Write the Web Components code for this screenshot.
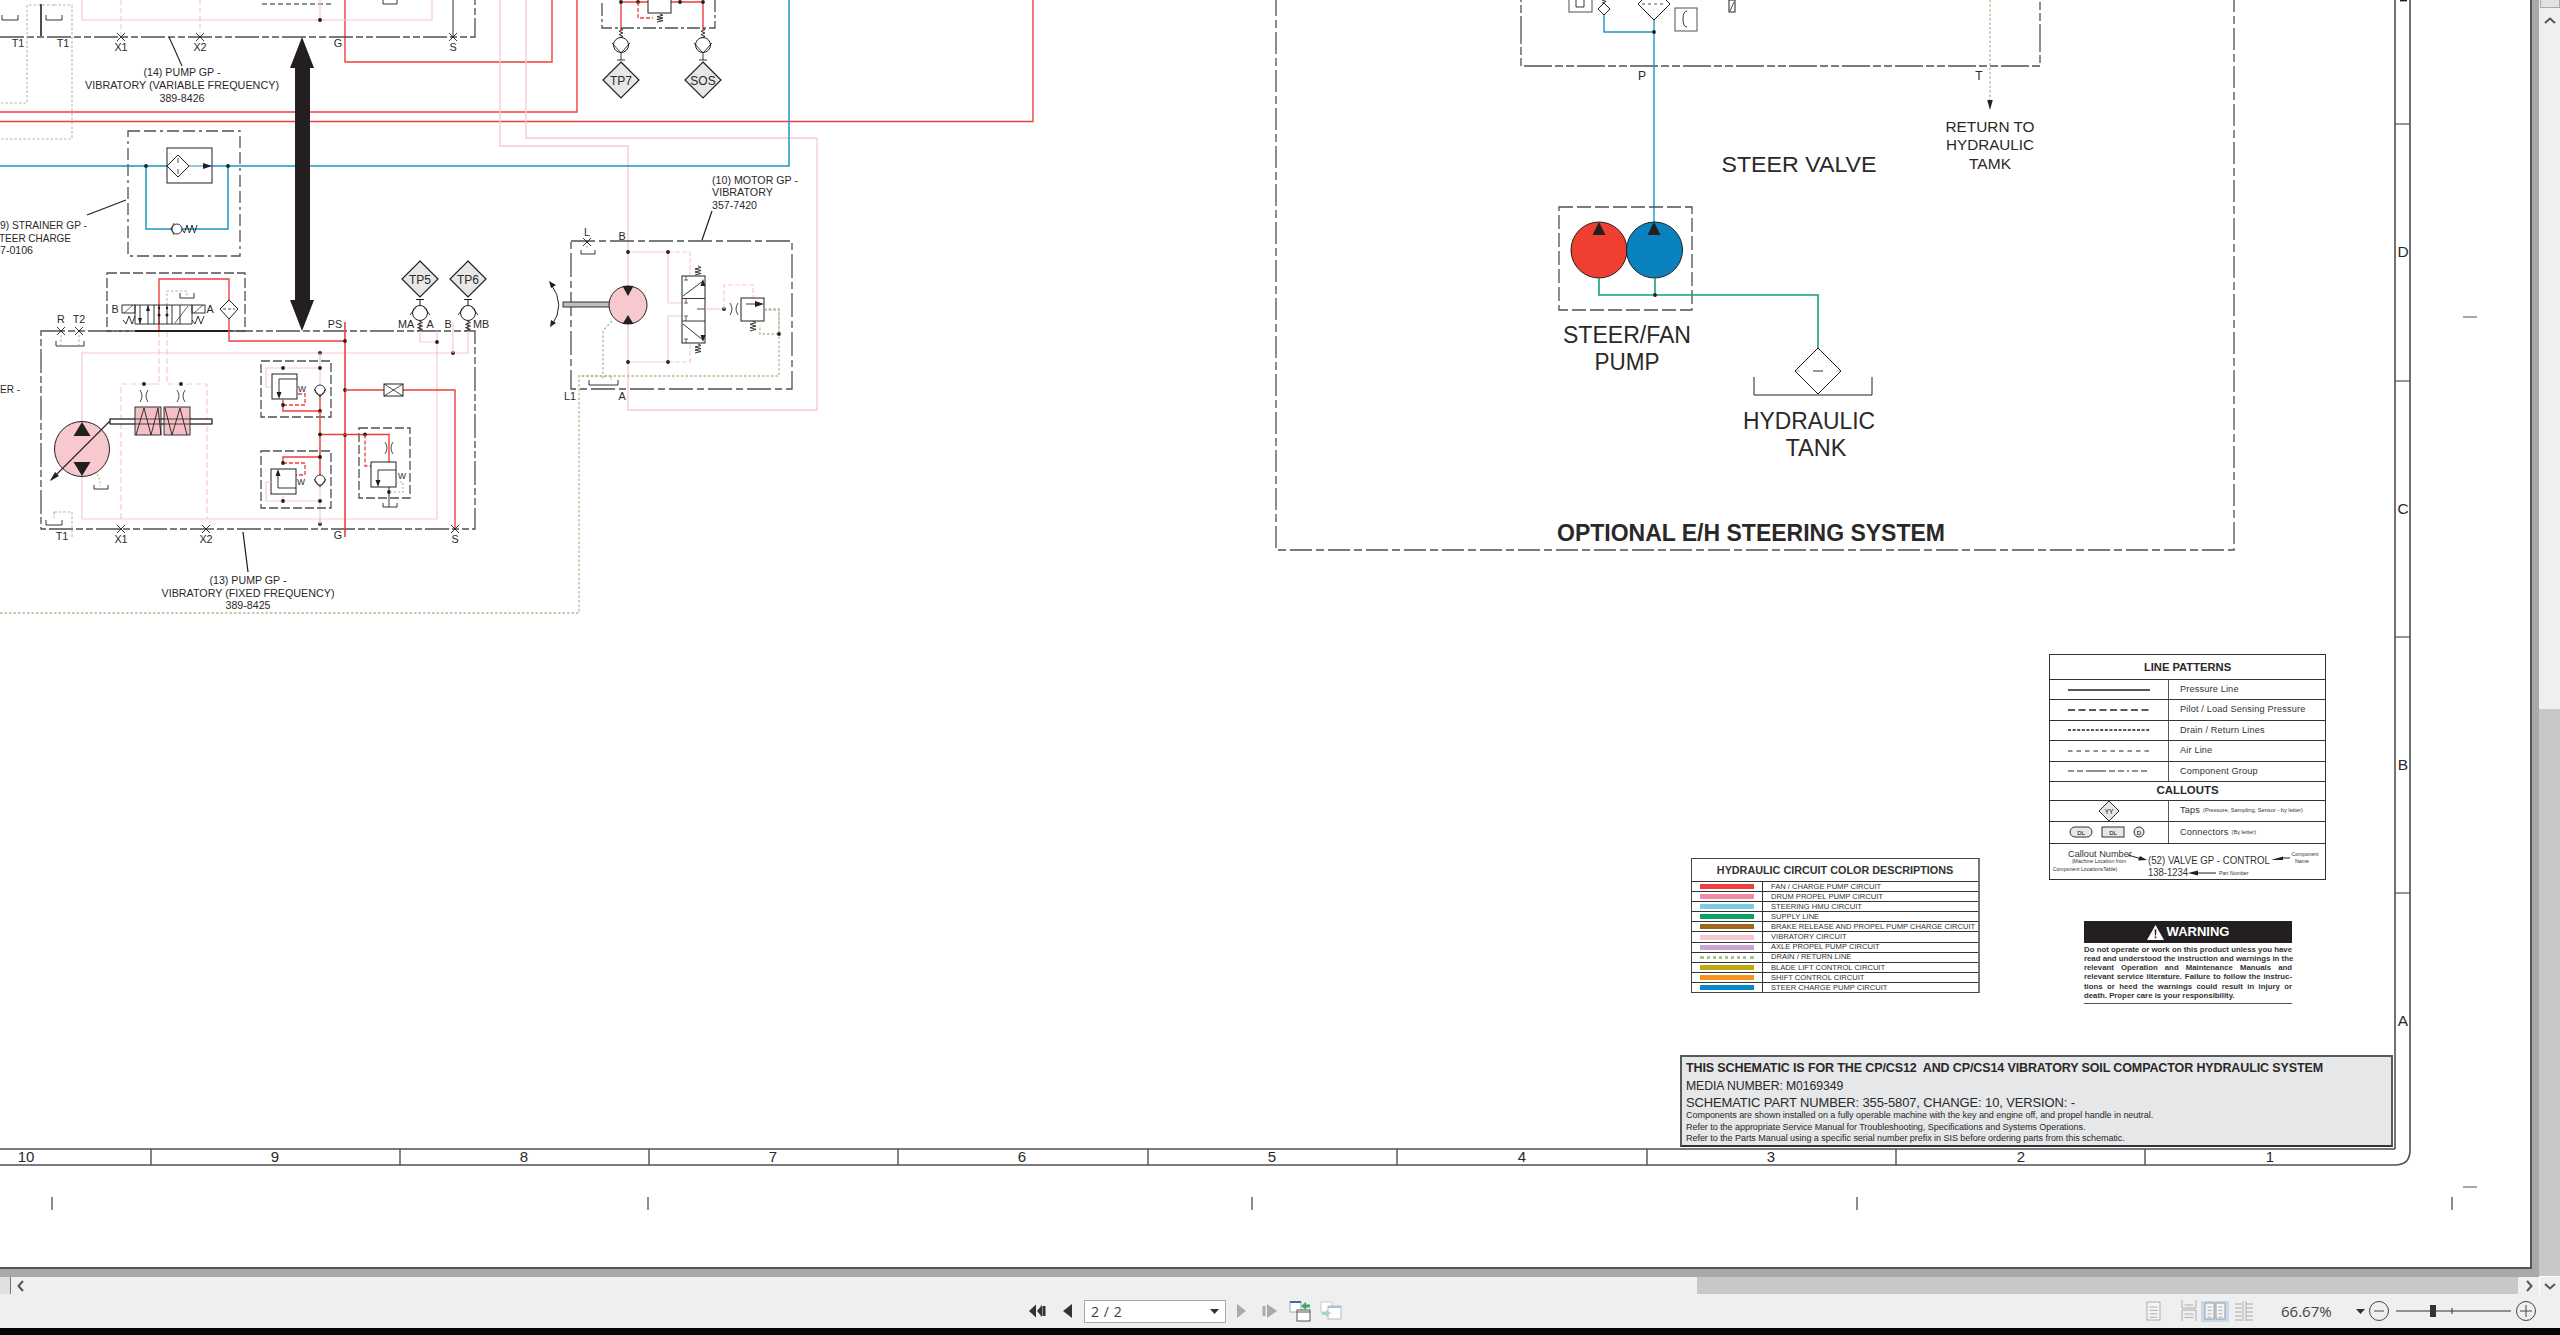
<!DOCTYPE html>
<html lang="en"><head><meta charset="utf-8"><title>Schematic</title>
<style>html,body{margin:0;height:100%;overflow:hidden;background:#000}</style></head>
<body><viewer-app></viewer-app>
<script>
const INK='#231f20',GREY='#4f5052',RED='#ee3f3c',PINK='#f7c8cd',BLUE='#1a96c4',SEA='#17a173',DRAIN='#a9c08f';
const GROUP='24 3 7 3 7 3';
const P=(d,c=INK,w=1,dash='',fill='none')=>`<path d="${d}" stroke="${c}" stroke-width="${w}" fill="${fill}"${dash?` stroke-dasharray="${dash}"`:''}/>`;
const DOT=(x,y,r=1.9)=>`<circle cx="${x}" cy="${y}" r="${r}" fill="${INK}"/>`;
const CROSS=(x,y,r=4)=>P(`M${x-r} ${y-r}L${x+r} ${y+r}M${x-r} ${y+r}L${x+r} ${y-r}`,INK,.9);
const T=(s,x,y,size=10.8,anchor='middle',len=0,weight='')=>`<text x="${x}" y="${y}" font-size="${size}" text-anchor="${anchor}"${weight?` font-weight="${weight}"`:''}${len?` textLength="${len}" lengthAdjust="spacingAndGlyphs"`:''}>${s}</text>`;
const GR=(x,y,w,h,dash=GROUP,c=GREY,sw=1.3)=>`<rect x="${x}" y="${y}" width="${w}" height="${h}" fill="none" stroke="${c}" stroke-width="${sw}" stroke-dasharray="${dash}"/>`;
const TANK=(x,y,w,h=5)=>P(`M${x} ${y-h}V${y}H${x+w}V${y-h}`,INK,.9);
function springV(x,y1,y2,a=3,n=4,c=INK){let d=`M${x} ${y1}`,s=(y2-y1)/(n*2);for(let i=0;i<n*2;i++)d+=`L${x+(i%2?-a:a)} ${y1+s*(i+1)}`;return P(d,c,.9)}
function springH(x1,x2,y,a=3,n=3,c=INK){let d=`M${x1} ${y}`,s=(x2-x1)/(n*2);for(let i=0;i<n*2;i++)d+=`L${x1+s*(i+1)} ${y+(i%2?-a:a)}`;return P(d,c,.9)}
const TRI=(x,tip,base,h=5)=>`<path d="M${x} ${tip}L${x-h} ${base}H${x+h}Z" fill="${INK}"/>`;
const TRIH=(tip,base,y,h=3)=>`<path d="M${tip} ${y}L${base} ${y-h}V${y+h}Z" fill="${INK}"/>`;
const ORI=(x,y)=>P(`M${x-4} ${y-6}Q${x} ${y} ${x-4} ${y+6}M${x+4} ${y-6}Q${x} ${y} ${x+4} ${y+6}`,INK,.8);
const TP=(cx,cy,label,r=18,size=12)=>`<path d="M${cx} ${cy-r}L${cx+r} ${cy}L${cx} ${cy+r}L${cx-r} ${cy}Z" fill="#e6e7e8" stroke="${INK}" stroke-width="1.2"/>`+T(label,cx,cy+4.5,size);
const CHK=(x,y,r=5)=>`<circle cx="${x}" cy="${y}" r="${r}" fill="#fff" stroke="${INK}" stroke-width=".9"/>`+P(`M${x-r-1} ${y-1}L${x} ${y+r+2}L${x+r+1} ${y-1}`,INK,.8);

class HydraulicSchematic extends HTMLElement{
  connectedCallback(){
    const s=[];
    // sheet frame
    s.push(P('M2395 0V1149M0 1149H2395M2410 0V1150Q2410 1165 2395 1165H0',GREY,1.6));
    [124,381,637,893].forEach(y=>s.push(P(`M2395 ${y}H2410`,GREY,1.2)));
    s.push(P('M2400 .7H2407',INK,1.4));
    [['D',251],['C',508],['B',764],['A',1020]].forEach(([l,y])=>s.push(T(l,2403,y+6,15.5)));
    [151,400,649,898,1148,1397,1647,1896,2145].forEach(x=>s.push(P(`M${x} 1149V1165`,GREY,1.4)));
    [['10',26],['9',275],['8',524],['7',773],['6',1022],['5',1272],['4',1522],['3',1771],['2',2021],['1',2270]].forEach(([l,x])=>s.push(T(l,x,1162,15)));
    [52,648,1252,1857,2452].forEach(x=>s.push(P(`M${x} 1197V1210`,GREY,1.3)));
    s.push(P('M2463 317H2477M2463 1187H2477',GREY,1.2));

    // long circuit runs
    s.push(P('M345 0V62H552V0',RED,1.4),P('M0 112H577V0',RED,1.4),P('M0 121.5H1033V0',RED,1.4));
    s.push(P('M500 0V146H628V410H817V138H526V0',PINK,1.3));
    s.push(P('M0 166H789V0',BLUE,1.5));
    s.push(P('M0 613H579V376H779V334M779 334V310H764',DRAIN,1.3,'2.5 2'));

    // pump 14 group (top)
    s.push(P('M0 37H475V0',GREY,1.3,GROUP));
    s.push(P('M27 5V103H0M54 5H27',DRAIN,1.1,'2.5 2'),P('M54 5H72V139H0',DRAIN,1.1,'2.5 2'));
    s.push(P('M2 15V20H18V15M46 15V20H62V15',INK,.9),P('M41 4V36',INK,1.6));
    s.push(P('M82 0V20H432V0',PINK,1.2),P('M121 0V36M200 0V36',PINK,1.2,'5 3'));
    s.push(P('M262 4H332',INK,1,'5 3'),P('M320 0V20',PINK,1.2),DOT(320,20,2),P('M383 0V4H397V0',INK,.9),P('M453 0V37',INK,.9));
    s.push(CROSS(121,37),CROSS(200,37),CROSS(453,37));
    s.push(T('T1',18,47),T('T1',63,47),T('X1',121,51),T('X2',200,51),T('G',338,47),T('S',453,51));
    s.push(P('M169 37L182 66',INK,1.1));
    s.push(T('(14) PUMP GP -',182,76,10.8,'middle',77),T('VIBRATORY (VARIABLE FREQUENCY)',182,89,10.8,'middle',194),T('389-8426',182,102,10.8,'middle',45));

    // strainer
    s.push(GR(128,131,112,125,'12 4 12 4 3 4'));
    s.push(P('M87 215L126 200',INK,1.1));
    s.push(T('9) STRAINER GP -',87,229,10.8,'end',87),T('TEER CHARGE',71,242,10.8,'end',72),T('7-0106',33,254,10.8,'end',33));
    s.push(P('M146 166V229H228V166',BLUE,1.5));
    s.push(`<rect x="167" y="148" width="45" height="35" fill="#fff" stroke="${INK}"/>`,P('M167 166H212',BLUE,1.2));
    s.push(`<path d="M178 155L189 166L178 177L167 166Z" fill="#fff" stroke="${INK}"/>`,P('M178 158V163M178 169V174',INK,.8),TRIH(212,203,166),DOT(146,166),DOT(228,166));
    s.push(`<circle cx="177" cy="229" r="5" fill="#fff" stroke="${INK}" stroke-width=".9"/>`,P('M174 223L171 229L174 235',INK,.8),springH(182,197,229,4,3));

    // small manifold above pump 13
    s.push(GR(107,273,138,58,'10 3 10 3'));
    s.push(P('M159 331V279H229V300',RED,1.4));
    s.push(P('M167 305V291H187V296',DRAIN,1.1,'2.5 2'),P('M180 293V298H194V293',INK,.9));
    s.push(`<path d="M229 300L238 309L229 319L220 309Z" fill="#fff" stroke="${INK}"/>`,P('M223 309H235',INK,.8,'3 2'));
    s.push(P('M229 319V341H345',RED,1.4),P('M159 331V384H144M167 331V384H207V519M121 519V384H159',PINK,1.2,'6 3'));
    s.push(`<rect x="122" y="305" width="13" height="8" fill="#fff" stroke="${INK}" stroke-width=".9"/><rect x="192" y="305" width="13" height="8" fill="#fff" stroke="${INK}" stroke-width=".9"/>`);
    s.push(P('M124 313L133 305M194 313L203 305',INK,.7),springH(123,135,320,4,2),springH(192,204,320,4,2));
    s.push(P('M135 305H192V324H135ZM140 305V324M148 305V324M154 305V324M159 305V324M167 305V324M172 305V324M180 305V324',INK,.9));
    s.push(TRI(148,305,311,2),TRI(140,324,318,2),DOT(159,315,1.5),DOT(167,315,1.5),DOT(159,308,1.2),DOT(167,308,1.2));
    s.push(P('M175 323L188 306',INK,.7));
    s.push(T('B',115,313),T('A',210,313));

    // pump 13 group
    s.push(GR(41,331,434,198));
    s.push(P('M135 331H228',INK,2.2));
    s.push(T('R',61,323),T('T2',79,323),CROSS(61,331),CROSS(79,331));
    s.push(P('M61 335V345M79 335V345',DRAIN,1.1,'2.5 2'),TANK(56,346,28,5));
    s.push(P('M82 519V353H468V331M82 519H437V331M420 331V342H437',PINK,1.2));
    s.push(DOT(437,342),DOT(453,353),P('M453 353V322',PINK,1.2),DOT(320,353),DOT(320,524));
    s.push(P('M320 353V390M320 435V524',PINK,1.2));
    // pump
    s.push(`<circle cx="82" cy="449" r="27.5" fill="#f7c9ce" stroke="${INK}" stroke-width="1"/>`,TRI(82,422,436,8.5),TRI(82,476,462,8.5));
    s.push(P('M51 480L110 421',INK,1.1),`<path d="M50 481L55 472L59 476Z" fill="${INK}"/>`);
    s.push(`<rect x="110" y="419" width="102" height="5" fill="#fff" stroke="${INK}" stroke-width=".8"/>`);
    s.push(P('M97 474L100 480V486',DRAIN,1.1,'2 2'),TANK(94,489,14,4));
    s.push(P('M54 512H72V537',DRAIN,1.1,'2.5 2'),P('M54 512V518',DRAIN,1.1,'2.5 2'),TANK(46,525,16,5));
    // control
    s.push(DOT(144,384),DOT(181,384),ORI(144,396),ORI(181,396));
    s.push(`<rect x="135" y="407" width="26" height="28" fill="#f4bfc5" stroke="${INK}" stroke-width=".9"/><rect x="164" y="407" width="26" height="28" fill="#f4bfc5" stroke="${INK}" stroke-width=".9"/>`);
    s.push(P('M136 435L144 408L151 435L158 408L161 435M165 408L172 435L180 408L187 435',INK,.9));
    s.push(`<rect x="110" y="419" width="102" height="5" fill="none" stroke="${INK}" stroke-width=".8"/>`);
    // relief boxes
    s.push(GR(261,361,70,56,'9 3'),GR(261,451,70,57,'9 3'),GR(359,428,51,70,'9 3'));
    s.push(P('M320 368H266V387H272',PINK,1.2),DOT(283,368),DOT(320,368));
    s.push(`<rect x="272" y="374" width="25" height="25" fill="#fff" stroke="${INK}"/>`,P('M297 379H279V395',INK,.9),TRI(279,399,392,2.5));
    s.push(T('W',302,392,8.5));
    s.push(P('M283 399V411H320V390',RED,1.4),P('M283 405H305V394H297',RED,1.3,'4 2'),DOT(283,405),DOT(320,411));
    s.push(CHK(320,390),P('M320 411V475',RED,1.4),CHK(320,480));
    s.push(P('M283 463V457H320',RED,1.4),P('M283 463H305V475H296',RED,1.3,'4 2'),DOT(283,463),DOT(320,457));
    s.push(`<rect x="271" y="469" width="25" height="25" fill="#fff" stroke="${INK}"/>`,P('M296 488H278V472',INK,.9),TRI(278,469,476,2.5));
    s.push(T('W',301,485,8.5));
    s.push(P('M283 494V501M320 501H266V482H271',PINK,1.2),DOT(283,501),DOT(320,501));
    s.push(P('M345 322V537',RED,1.6),DOT(345,341),DOT(345,390),DOT(345,435));
    s.push(P('M345 390H455V529',RED,1.4));
    s.push(`<rect x="384" y="384" width="19" height="12" fill="#fff" stroke="${INK}"/>`,P('M384 384L403 396M384 396L403 384',INK,.8));
    s.push(P('M320 434.5H389V462',RED,1.4),DOT(320,434.5),DOT(365,434.5),ORI(389,448));
    s.push(P('M365 434.5V466H372',RED,1.3,'4 2'));
    s.push(`<rect x="371" y="462" width="25" height="25" fill="#fff" stroke="${INK}"/>`,P('M396 470H378V484',INK,.9),TRI(378,487,480,2.5));
    s.push(T('W',402,479,8.5));
    s.push(P('M389 487V507',INK,.9),DOT(389,492),P('M396 482H403V492H389',DRAIN,1.1,'2 2'),TANK(383,507,14,4));
    s.push(CROSS(121,529),CROSS(206,529),CROSS(455,529));
    s.push(T('T1',62,540),T('X1',121,543),T('X2',206,543),T('G',338,539),T('S',455,543),T('PS',335,328),T('MA',406,328),T('A',430,328),T('B',448,328),T('MB',481,328),T('ER -',20,393,10.8,'end',20));
    s.push(P('M243 532L248 572',INK,1.2));
    s.push(T('(13) PUMP GP -',248,584,10.8,'middle',77),T('VIBRATORY (FIXED FREQUENCY)',248,597,10.8,'middle',173),T('389-8425',248,609,10.8,'middle',45));
    s.push(P('M420 321V331M468 321V331',INK,.8));
    // big double arrow
    s.push(`<path d="M302 37L314 68H310V300H314L302 331L290 300H295V68H290Z" fill="${INK}"/>`);
    // test ports
    s.push(TP(420,279,'TP5'),TP(468,279,'TP6'));
    [420,468].forEach(x=>{s.push(P(`M${x-4} 299.5H${x+4}M${x} 299.5V306`,INK,1),`<circle cx="${x}" cy="313" r="7.5" fill="#fff" stroke="${INK}"/>`,P(`M${x-10} 315L${x-4} 307M${x+10} 315L${x+4} 307`,INK,.9),springV(x,321,331,2.5,3))});
    // upper test ports
    s.push(GR(602,-20,113,48,'13 3 3 3'));
    s.push(P('M621 2H703V30',RED,1.4),P('M621 2V30',RED,1.4),DOT(621,2),DOT(638,2),DOT(680,2),DOT(703,2));
    s.push(`<rect x="648" y="-4" width="23" height="17" fill="#fff" stroke="${INK}"/>`,P('M638 2V18H653',RED,1.3,'4 2'),springV(660,14,22,3,3));
    [[621,'TP7'],[703,'SOS']].forEach(([x,l])=>{s.push(springV(x,28,38,2,3),`<circle cx="${x}" cy="45" r="7.5" fill="#fff" stroke="${INK}"/>`,P(`M${x-9} 43L${x} 53L${x+9} 43M${x} 53V60M${x-4} 60H${x+4}`,INK,.9),TP(x,80,l))});
    // motor group
    s.push(GR(571,241,221,148,'24 4 7 4'));
    s.push(P('M712 211L702 240',INK,1.2));
    s.push(T('(10) MOTOR GP -',712,184,10.8,'start',86),T('VIBRATORY',712,196,10.8,'start',61),T('357-7420',712,209,10.8,'start',45));
    s.push(T('L',587,236),CROSS(587,242),T('B',622,240),T('L1',570,400),T('A',622,400));
    s.push(P('M587 246V250',DRAIN,1.1,'2 2'),TANK(581,254,14,4));
    s.push(P('M628 252H668V303H682',PINK,1.2),P('M668 252H690V275',PINK,1.2,'5 2'),P('M628 362H668V316H682',PINK,1.2),P('M668 362H690V343',PINK,1.2,'5 2'));
    s.push(DOT(628,252),DOT(668,252),DOT(628,362),DOT(668,362));
    s.push(`<rect x="563" y="302" width="47" height="5" fill="#bcbec0" stroke="${INK}" stroke-width=".9"/>`);
    s.push(`<circle cx="628" cy="305" r="19" fill="#f7c9ce" stroke="${INK}"/>`,TRI(628,296,286,5.5),TRI(628,315,324,5.5));
    s.push(P('M551 284Q566 305 552 325',INK,1),`<path d="M549 281L556 285L551 288Z" fill="${INK}"/><path d="M550 327L556 323L551 320Z" fill="${INK}"/>`);
    s.push(springV(698,266,275,3,3),springV(698,344,353,3,3));
    s.push(`<rect x="682" y="276" width="23" height="67" fill="#fff" stroke="${INK}" stroke-width="1"/>`,P('M682 298.5H705M682 321H705M683 296L703 281M683 324L703 340',INK,.9));
    s.push(TRI(703,279,286,2.5),TRI(703,342,335,2.5),P('M686 276V280M684 280H688M686 343V339M684 339H688M686 298V303M684 303H688M686 321V316M684 316H688',INK,.7));
    s.push(P('M705 309H724',PINK,1.2),P('M697 309H705',INK,.8),DOT(724,309),ORI(734,309));
    s.push(P('M724 309V285H753V298',PINK,1.2,'5 2'));
    s.push(`<rect x="741" y="298" width="23" height="23" fill="#fff" stroke="${INK}"/>`,P('M746 304H760',INK,.9),TRIH(764,755,304,3));
    s.push(springV(753,321,331,3,3));
    s.push(P('M764 309H779V334H760V325',DRAIN,1.3,'2.5 2'),DOT(779,334));
    s.push(P('M612 321L603 331V380',DRAIN,1.3,'2.5 2'),P('M611 376H579M611 376V381',DRAIN,1.3,'2.5 2'),TANK(589,385,29,5));

    // steering system
    s.push(GR(1276,-40,958,590,'22 4 8 4'));
    s.push(GR(1521,-40,519,106,'28 3 8 3 8 3'));
    s.push(P('M1654 0V224',BLUE,1.4),P('M1604 14V32H1654',BLUE,1.4),DOT(1654,32));
    s.push(`<rect x="1569" y="-6" width="23" height="18" fill="#fff" stroke="${GREY}"/><path d="M1654 20L1670 4L1654 -12L1638 4Z" fill="#fff" stroke="${INK}"/>`,P('M1642 4H1666',INK,.8,'3 3'));
    s.push(`<path d="M1604 3L1610 9L1604 15L1598 9Z" fill="#fff" stroke="${INK}"/>`,springV(1604,-3,3,2,2),`<rect x="1675" y="8" width="22" height="23" fill="#fff" stroke="${GREY}"/>`,P('M1687 11Q1683 11 1683 19T1687 27',INK,.9));
    s.push(P('M1576 0V7H1584V0',INK,.9),`<rect x="1729" y="0" width="6" height="12" fill="#fff" stroke="${INK}"/>`,P('M1730 11L1734 2',INK,.8));
    s.push(P('M1990 0V100',DRAIN,1.3,'2.5 2'),TRI(1990,110,100,2.8));
    s.push(T('P',1642,80,12),T('T',1979,80,12));
    s.push(T('RETURN TO',1990,132,15,'middle',89),T('HYDRAULIC',1990,150,15,'middle',88),T('TAMK',1990,169,15,'middle',42));
    s.push(T('STEER VALVE',1799,172,22.5,'middle',155));
    s.push(GR(1559,207,133,103,'14 4 14 4'));
    s.push(`<circle cx="1599" cy="250" r="28" fill="#ee3f30" stroke="${INK}"/><circle cx="1654.5" cy="250" r="28" fill="#0b82c0" stroke="${INK}"/>`);
    s.push(TRI(1599,222,235,6.5),TRI(1654,222,235,6.5));
    s.push(P('M1599 278V295H1818V348M1655 278V295',SEA,1.6),DOT(1655,295));
    s.push(`<path d="M1818 348L1841 371L1818 394L1795 371Z" fill="#fff" stroke="${INK}"/>`,P('M1796 371H1800M1836 371H1840',DRAIN,1),P('M1813 371H1823',GREY,1.2));
    s.push(P('M1754 377V395H1872V377',INK,1));
    s.push(T('STEER/FAN',1627,342.5,23.5,'middle',128),T('PUMP',1627,369.5,23.5,'middle',65));
    s.push(T('HYDRAULIC',1809,428.5,23.5,'middle',132),T('TANK',1816,455.5,23.5,'middle',61));
    s.push(T('OPTIONAL E/H STEERING SYSTEM',1751,541,23.4,'middle',388,'700'));
    this.attachShadow({mode:'open'}).innerHTML=`<style>:host{display:block;width:2531px;height:1268px}svg{display:block;font-family:"Liberation Sans",Arial,sans-serif;fill:${INK}}text{fill:#2b2829}</style><svg width="2531" height="1268" viewBox="0 0 2531 1268">${s.join('')}</svg>`;
  }
}
customElements.define('hydraulic-schematic',HydraulicSchematic);

class LinePatterns extends HTMLElement{
  connectedCallback(){
    const sample=(dash,w=1.4)=>`<svg width="84" height="6" viewBox="0 0 84 6"><line x1="1" y1="3" x2="83" y2="3" stroke="#231f20" stroke-width="${w}" stroke-dasharray="${dash}"/></svg>`;
    this.attachShadow({mode:'open'}).innerHTML=`<style>
    :host{display:block;position:absolute;left:2049px;top:654px;width:277px;height:226px;box-sizing:border-box;border:1px solid #333;background:#fff;font:9.2px/1 "Liberation Sans",Arial,sans-serif;color:#333}
    .g{display:grid;grid-template-columns:119px 1fr;grid-template-rows:24px repeat(5,20.4px) 19px 21px 22px 1fr;height:100%}
    .h{grid-column:1/3;font-weight:700;text-align:center;display:flex;align-items:center;justify-content:center;font-size:11.2px;color:#2b2829;padding-top:2px;box-sizing:border-box}
    .h.b{font-size:11.4px;border-top:1px solid #333;padding-top:0}
    .l,.r{display:flex;align-items:center;border-top:1px solid #333}
    .l{justify-content:center;border-right:1px solid #555;gap:9px}
    .r{padding-left:11px;letter-spacing:.15px}
    small{font-size:5.7px;margin-left:3px;letter-spacing:0}
    .w{grid-column:1/3;border-top:1px solid #333}
    svg{display:block}
    .w text{fill:#333}
    </style><div class="g">
    <div class="h">LINE PATTERNS</div>
    <div class="l">${sample('',1.5)}</div><div class="r">Pressure Line</div>
    <div class="l">${sample('7 3.5',1.5)}</div><div class="r">Pilot / Load Sensing Pressure</div>
    <div class="l">${sample('3 1.6',1.4)}</div><div class="r">Drain / Return Lines</div>
    <div class="l">${sample('4.5 4',1)}</div><div class="r">Air Line</div>
    <div class="l">${sample('6 3 6 3 20 3 6 3 6 3 2 3',1)}</div><div class="r">Component Group</div>
    <div class="h b">CALLOUTS</div>
    <div class="l"><svg width="22" height="22" viewBox="0 0 22 22"><path d="M11 1L21 11L11 21L1 11Z" fill="#e6e7e8" stroke="#333"/><text x="11" y="13.5" font-size="6.5" text-anchor="middle">YY</text></svg></div><div class="r">Taps<small>(Pressure, Sampling, Sensor - by letter)</small></div>
    <div class="l"><svg width="80" height="12" viewBox="0 0 80 12"><rect x="1" y="1" width="22" height="10" rx="5" fill="#e6e7e8" stroke="#333"/><text x="12" y="8.5" font-size="6" text-anchor="middle">DL</text><rect x="33" y="1" width="22" height="10" fill="#e6e7e8" stroke="#333"/><text x="44" y="8.5" font-size="6" text-anchor="middle">DL</text><circle cx="70" cy="6" r="5" fill="#e6e7e8" stroke="#333"/><text x="70" y="8.5" font-size="6" text-anchor="middle">D</text></svg></div><div class="r">Connectors<small>(By letter)</small></div>
    <div class="w"><svg width="275" height="38" viewBox="0 0 275 38" font-family="Liberation Sans,Arial,sans-serif">
      <text x="18" y="13" font-size="9.2">Callout Number</text>
      <text x="49" y="19" font-size="5.2" text-anchor="middle">(Machine Location from</text>
      <text x="35" y="27" font-size="5.2" text-anchor="middle">Component LocationsTable)</text>
      <path d="M78 11L90 14.5" stroke="#231f20"/><path d="M97 16L88 16.5L90 12Z" fill="#231f20"/>
      <text x="98" y="20" font-size="10.2" textLength="122" lengthAdjust="spacingAndGlyphs">(52) VALVE GP - CONTROL</text>
      <path d="M240 14H232" stroke="#231f20"/><path d="M221 16L233 12.5V16Z" fill="#231f20"/>
      <text x="255" y="12" font-size="5.2" text-anchor="middle">Component</text><text x="252" y="19" font-size="5.2" text-anchor="middle">Name</text>
      <text x="98" y="32" font-size="10" textLength="40" lengthAdjust="spacingAndGlyphs">138-1234</text>
      <path d="M166 29H146" stroke="#231f20"/><path d="M138 29L148 26.5V31.5Z" fill="#231f20"/>
      <text x="169" y="31" font-size="5.2">Part Number</text>
    </svg></div></div>`;
  }
}
customElements.define('line-patterns',LinePatterns);

class ColorLegend extends HTMLElement{
  connectedCallback(){
    const rows=[['#ee3e3e','FAN / CHARGE PUMP CIRCUIT'],['#f28ba8','DRUM PROPEL PUMP CIRCUIT'],['#7ecbe3','STEERING HMU CIRCUIT'],['#0b9f62','SUPPLY LINE'],['#a0671c','BRAKE RELEASE AND PROPEL PUMP CHARGE CIRCUIT'],['#f7c8d2','VIBRATORY CIRCUIT'],['#c9a6d2','AXLE PROPEL PUMP CIRCUIT'],['dash','DRAIN / RETURN LINE'],['#bdaa12','BLADE LIFT CONTROL CIRCUIT'],['#f7931e','SHIFT CONTROL CIRCUIT'],['#0b88c6','STEER CHARGE PUMP CIRCUIT']];
    this.attachShadow({mode:'open'}).innerHTML=`<style>
    :host{display:block;position:absolute;left:1691px;top:858px;width:289px;height:135px;box-sizing:border-box;border:1px solid #444;border-right:2px solid #777;background:#fff;font:7.58px/1 "Liberation Sans",Arial,sans-serif;color:#333;overflow:hidden}
    .h{height:22px;display:flex;align-items:center;justify-content:center;font-weight:700;font-size:10.8px;color:#333}
    .g{display:grid;grid-template-columns:71px 1fr;grid-auto-rows:10.1px}
    .s{border-top:1px solid #333;border-right:1px solid #333;display:flex;align-items:center;justify-content:center;padding-right:1px}
    .t{border-top:1px solid #333;padding-left:8px;display:flex;align-items:center;white-space:nowrap}
    i{display:block;width:54px;height:5px}
    i.d{height:0;border-top:3px dotted #a9c48f}
    </style><div class="h">HYDRAULIC CIRCUIT COLOR DESCRIPTIONS</div><div class="g">${rows.map(([c,t])=>`<div class="s"><i ${c==='dash'?'class="d"':`style="background:${c}"`}></i></div><div class="t">${t}</div>`).join('')}</div>`;
  }
}
customElements.define('color-legend',ColorLegend);

class WarningBox extends HTMLElement{
  connectedCallback(){
    const lines=['Do not operate or work on this product unless you have','read and understood the instruction and warnings in the','relevant Operation and Maintenance Manuals and','relevant service literature. Failure to follow the instruc-','tions or heed the warnings could result in injury or'];
    this.attachShadow({mode:'open'}).innerHTML=`<style>
    :host{display:block;position:absolute;left:2084px;top:921px;width:208px;height:83px;box-sizing:border-box;border-bottom:1.5px solid #555;background:#fff;font:700 7.8px/9.3px "Liberation Sans",Arial,sans-serif;color:#333}
    .b{height:22px;background:#231f20;color:#fff;display:flex;align-items:center;justify-content:center;gap:3px;font-size:13px}
    .x{padding-top:1.5px}
    .x div{text-align:justify;text-align-last:justify;white-space:nowrap}
    .x div:last-child{text-align-last:left}
    </style><div class="b"><svg width="17" height="15" viewBox="0 0 17 15"><path d="M8.5 0L17 15H0Z" fill="#fff"/><path d="M7.6 4.5H9.4L9 10.5H8ZM7.7 11.5H9.3V13.2H7.7Z" fill="#231f20"/></svg><span>WARNING</span></div>
    <div class="x">${lines.map(l=>`<div>${l}</div>`).join('')}<div>death. Proper care is your responsibility.</div></div>`;
  }
}
customElements.define('warning-box',WarningBox);

class TitleBlock extends HTMLElement{
  connectedCallback(){
    this.attachShadow({mode:'open'}).innerHTML=`<style>
    :host{display:block;position:absolute;left:1680px;top:1055px;width:713px;height:92px;box-sizing:border-box;border:2px solid #58595b;border-bottom-color:#333;background:#e6e7e8;padding:3.5px 0 0 4px;font-family:"Liberation Sans",Arial,sans-serif;color:#2b2829;white-space:nowrap}
    div{display:block}
    .a{font:700 12.5px/14px "Liberation Sans",Arial,sans-serif;height:18px;letter-spacing:-.12px}
    .b{font-size:12.25px;line-height:14px;height:17.5px;letter-spacing:-.1px}
    .c{font-size:12.95px;line-height:14px;height:14px;letter-spacing:-.1px}
    .d{font-size:9.05px;line-height:11.6px;letter-spacing:-.06px}
    </style><div class="a">THIS SCHEMATIC IS FOR THE CP/CS12&nbsp; AND CP/CS14 VIBRATORY SOIL COMPACTOR HYDRAULIC SYSTEM</div>
    <div class="b">MEDIA NUMBER: M0169349</div>
    <div class="c">SCHEMATIC PART NUMBER: 355-5807, CHANGE: 10, VERSION: -</div>
    <div class="d">Components are shown installed on a fully operable machine with the key and engine off, and propel handle in neutral.</div>
    <div class="d">Refer to the appropriate Service Manual for Troubleshooting, Specifications and Systems Operations.</div>
    <div class="d">Refer to the Parts Manual using a specific serial number prefix in SIS before ordering parts from this schematic.</div>`;
  }
}
customElements.define('title-block',TitleBlock);

class DocPage extends HTMLElement{
  connectedCallback(){
    this.attachShadow({mode:'open'}).innerHTML=`<style>
    :host{display:block;flex:1;min-width:0;background:#a9a9a9;box-sizing:border-box;padding:0 7px 8px 0}
    .p{position:relative;height:100%;background:#fff;overflow:hidden;box-sizing:border-box;border-right:2px solid #555;border-bottom:2px solid #555}
    </style><div class="p"><slot></slot></div>`;
  }
}
customElements.define('doc-page',DocPage);

const CHEV=(d)=>`<svg width="14" height="14" viewBox="0 0 14 14"><path d="${d}" fill="none" stroke="#555" stroke-width="2"/></svg>`;
class VScrollbar extends HTMLElement{
  connectedCallback(){
    this.attachShadow({mode:'open'}).innerHTML=`<style>
    :host{display:flex;flex-direction:column;width:21px;background:#efefef;position:relative}
    .t{height:8px;background:#e2e2e2;border:1px solid #aaa;border-top:0;box-sizing:border-box;margin-left:1px}
    .c{display:flex;justify-content:center;height:18px;align-items:center;padding-top:4px}
    .s{flex:1}
    .m{height:567px;background:#c8c8c8;border-bottom:1px solid #fff}
    </style><div class="t"></div><div class="c">${CHEV('M2 9L7 4.5L12 9')}</div><div class="s"></div><div class="m"></div>`;
  }
}
customElements.define('v-scrollbar',VScrollbar);

class HScrollbar extends HTMLElement{
  connectedCallback(){
    this.attachShadow({mode:'open'}).innerHTML=`<style>
    :host{display:flex;height:17px;background:#efefef;align-items:stretch}
    .a{width:10px;background:#e0e0e0;border-right:1px solid #777}
    .c{display:flex;align-items:center;justify-content:center}
    .l{width:20px}
    .s{flex:1}
    .m{width:821px;background:#c8c8c8}
    .r{width:21px}
    .d{width:21px;border-left:1px solid #fff;box-sizing:border-box}
    </style><div class="a"></div><div class="c l">${CHEV('M9 2L4.5 7L9 12')}</div><div class="s"></div><div class="m"></div><div class="c r">${CHEV('M5 2L9.5 7L5 12')}</div><div class="c d">${CHEV('M2 5L7 9.5L12 5')}</div>`;
  }
}
customElements.define('h-scrollbar',HScrollbar);

class ViewerToolbar extends HTMLElement{
  connectedCallback(){
    const ic=(w,body)=>`<svg width="${w}" height="22" viewBox="0 0 ${w} 22">${body}</svg>`;
    const pageLines=(x,y,w,h)=>{let s='';for(let i=4;i<h-1;i+=3.4)s+=`<path d="M${x+2.5} ${y+i}H${x+w-2.5}" stroke="#adadad"/>`;return s};
    this.attachShadow({mode:'open'}).innerHTML=`<style>
    :host{display:grid;grid-template-columns:1028px 1fr;height:34px;background:#efefef;align-items:center;font-family:"Open Sans","Noto Sans",sans-serif;color:#3c3c3c}
    .n{grid-column:2;display:flex;align-items:center;height:100%}
    svg{display:block}
    .i{width:142px;height:23px;box-sizing:border-box;border:1px solid #a9a9a9;background:#fff;display:flex;align-items:center;justify-content:space-between;padding:0 6px;font-size:14px;margin:0 10px 0 11px;letter-spacing:.6px}
    .v{display:flex;align-items:center}
    .hl{background:#c6d9ee;height:21px;width:28px;display:flex;align-items:center;justify-content:center}
    .z{font-size:15px;width:75px;margin-left:27px;color:#444}
    </style><div class="n">
      ${ic(21,'<path d="M1 11L8 4.5V17.5Z" fill="#333"/><path d="M9 11L14 5V17L9 11Z" fill="#333"/><path d="M16 6V16" stroke="#333" stroke-width="3"/>')}
      <span style="width:12px"></span>
      ${ic(12,'<path d="M2 11L11 4V18Z" fill="#333"/>')}
      <div class="i"><span>2 / 2</span><svg width="9" height="5" viewBox="0 0 9 5"><path d="M0 0H9L4.5 5Z" fill="#333"/></svg></div>
      ${ic(12,'<path d="M10 11L1 4V18Z" fill="#aaa"/>')}
      <span style="width:14px"></span>
      ${ic(18,'<path d="M2 6V16" stroke="#aaa" stroke-width="3"/><path d="M5 4L15 11L5 18Z" fill="#aaa"/>')}
      <span style="width:9px"></span>
      ${ic(24,'<rect x="1" y="2" width="11" height="10" fill="#fff" stroke="#aaa"/><path d="M1 2H12" stroke="#3c6ea8" stroke-width="2"/><rect x="8" y="10" width="13" height="11" fill="#fff" stroke="#555"/><path d="M8 12H21" stroke="#555"/><path d="M12 6L17 2V4.5H21V7.5H17V10Z" fill="#3aa774"/>')}
      <span style="width:7px"></span>
      ${ic(24,'<rect x="1" y="2" width="11" height="10" fill="#fff" stroke="#ccc"/><rect x="8" y="6" width="13" height="13" fill="#fff" stroke="#bbb"/><path d="M8 7H21" stroke="#a9c3de" stroke-width="2"/><path d="M11 13L6 10V12H2V15H6V17Z" fill="#a9d4be"/>')}
      <div class="v" style="margin-left:802px">
        ${ic(16,`<rect x="1" y="2" width="13" height="18" fill="#f5f5f5" stroke="#adadad"/>${pageLines(1,3,13,16)}`)}
        <span style="width:19px"></span>
        ${ic(17,`<path d="M1 0V8H15V0M1 10H15V21M1 10V21" fill="none" stroke="#adadad"/>${pageLines(1,1,14,7)}${pageLines(1,10,14,11)}`)}
        <span style="width:3px"></span>
        <div class="hl">${ic(22,`<rect x="1" y="3" width="9" height="16" fill="#f5f5f5" stroke="#9c9c9c"/><rect x="12" y="3" width="9" height="16" fill="#f5f5f5" stroke="#9c9c9c"/>${pageLines(1,3,9,16)}${pageLines(12,3,9,16)}`)}</div>
        <span style="width:5px"></span>
        ${ic(20,'<path d="M1 4H8M1 8H8M1 12H8M1 16H8M1 20H8M12 1V21M12 4H19M12 8H19M12 12H19M12 16H19M12 20H19M9 1V21" fill="none" stroke="#adadad"/>')}
      </div>
      <div class="z">66.67%</div>
      ${ic(9,'<path d="M0 9H9L4.5 14Z" fill="#333"/>')}
      <span style="width:3px"></span>
      ${ic(22,'<circle cx="11" cy="11" r="9.5" fill="none" stroke="#444"/><path d="M6 11H16" stroke="#444"/>')}
      <span style="width:5px"></span>
      ${ic(117,'<path d="M1 11H116" stroke="#333"/><path d="M57 8V14" stroke="#333"/><rect x="35" y="5" width="6" height="12" fill="#333"/>')}
      <span style="width:3px"></span>
      ${ic(22,'<circle cx="11" cy="11" r="9.5" fill="none" stroke="#444"/><path d="M5 11H17M11 5V17" stroke="#444"/>')}
    </div>`;
  }
}
customElements.define('viewer-toolbar',ViewerToolbar);

class ViewerApp extends HTMLElement{
  connectedCallback(){
    this.attachShadow({mode:'open'}).innerHTML=`<style>
    :host{display:flex;flex-direction:column;height:100vh;background:#000}
    .m{display:flex;height:1277px}
    .k{height:7px;background:#050505}
    </style><div class="m"><doc-page>
      <hydraulic-schematic></hydraulic-schematic>
      <line-patterns></line-patterns>
      <color-legend></color-legend>
      <warning-box></warning-box>
      <title-block></title-block>
    </doc-page><v-scrollbar></v-scrollbar></div><h-scrollbar></h-scrollbar><viewer-toolbar></viewer-toolbar><div class="k"></div>`;
  }
}
customElements.define('viewer-app',ViewerApp);
</script></body></html>
